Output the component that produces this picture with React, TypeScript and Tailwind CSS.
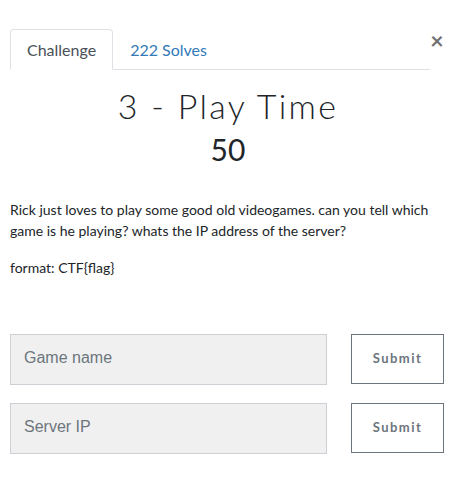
import { useState } from 'react'

export default function App() {
  const [tab, setTab] = useState<'challenge' | 'solves'>('challenge')
  const [game, setGame] = useState('')
  const [ip, setIp] = useState('')

  return (
    <div className="w-[456px] h-[480px] bg-white font-['Lato',sans-serif] text-[#212529]">
      {/* Tabs + close */}
      <div className="flex items-start pl-[10px] pt-[29px]">
        <div className="flex flex-1 border-b border-[#dee2e6]">
          <button
            onClick={() => setTab('challenge')}
            className={`h-[41px] px-[16px] text-[16px] rounded-t-[4px] -mb-px border ${
              tab === 'challenge'
                ? 'border-[#dee2e6] border-b-white bg-white text-[#495057]'
                : 'border-transparent text-[#337ab7]'
            }`}
          >
            Challenge
          </button>
          <button
            onClick={() => setTab('solves')}
            className={`h-[41px] px-[16px] text-[16px] rounded-t-[4px] -mb-px border ${
              tab === 'solves'
                ? 'border-[#dee2e6] border-b-white bg-white text-[#495057]'
                : 'border-transparent text-[#337ab7]'
            }`}
          >
            222 Solves
          </button>
        </div>
        <button className="w-[14px] mr-[12px] text-[23px] leading-none font-bold text-[#707070] text-center">
          ×
        </button>
      </div>

      {/* Title */}
      <div className="text-center mt-[16px]">
        <h2 className="text-[34px] leading-[40px] font-light tracking-[2.3px] text-[#212529]">
          3 - Play Time
        </h2>
        <h4 className="text-[30px] leading-[36px] mt-[5px] text-[#212529]">50</h4>
      </div>

      {/* Description */}
      <div className="px-[10px] mt-[32px] text-[14px] leading-[21px] text-[#212529]">
        <p>
          Rick just loves to play some good old videogames. can you tell which game is he playing?
          whats the IP address of the server?
        </p>
        <p className="mt-[16px]">format: CTF{'{'}flag{'}'}</p>
      </div>

      {/* Inputs */}
      <div className="flex flex-col gap-[18px] pl-[10px] pr-[12px] mt-[56px]">
        <div className="flex gap-[24px]">
          <input
            value={game}
            onChange={e => setGame(e.target.value)}
            placeholder="Game name"
            className="flex-1 h-[51px] px-[13px] pb-[4px] bg-[#f0f0f0] border border-[#ccd0d5] text-[16px] font-['Liberation_Sans',sans-serif] placeholder:text-[#6c757d] outline-none"
          />
          <button className="w-[93px] h-[50px] border border-[#6c757d] text-[13px] font-bold tracking-[1.5px] text-[#6c757d]">
            Submit
          </button>
        </div>
        <div className="flex gap-[24px]">
          <input
            value={ip}
            onChange={e => setIp(e.target.value)}
            placeholder="Server IP"
            className="flex-1 h-[51px] px-[13px] pb-[4px] bg-[#f0f0f0] border border-[#ccd0d5] text-[16px] font-['Liberation_Sans',sans-serif] placeholder:text-[#6c757d] outline-none"
          />
          <button className="w-[93px] h-[50px] border border-[#6c757d] text-[13px] font-bold tracking-[1.5px] text-[#6c757d]">
            Submit
          </button>
        </div>
      </div>
    </div>
  )
}
